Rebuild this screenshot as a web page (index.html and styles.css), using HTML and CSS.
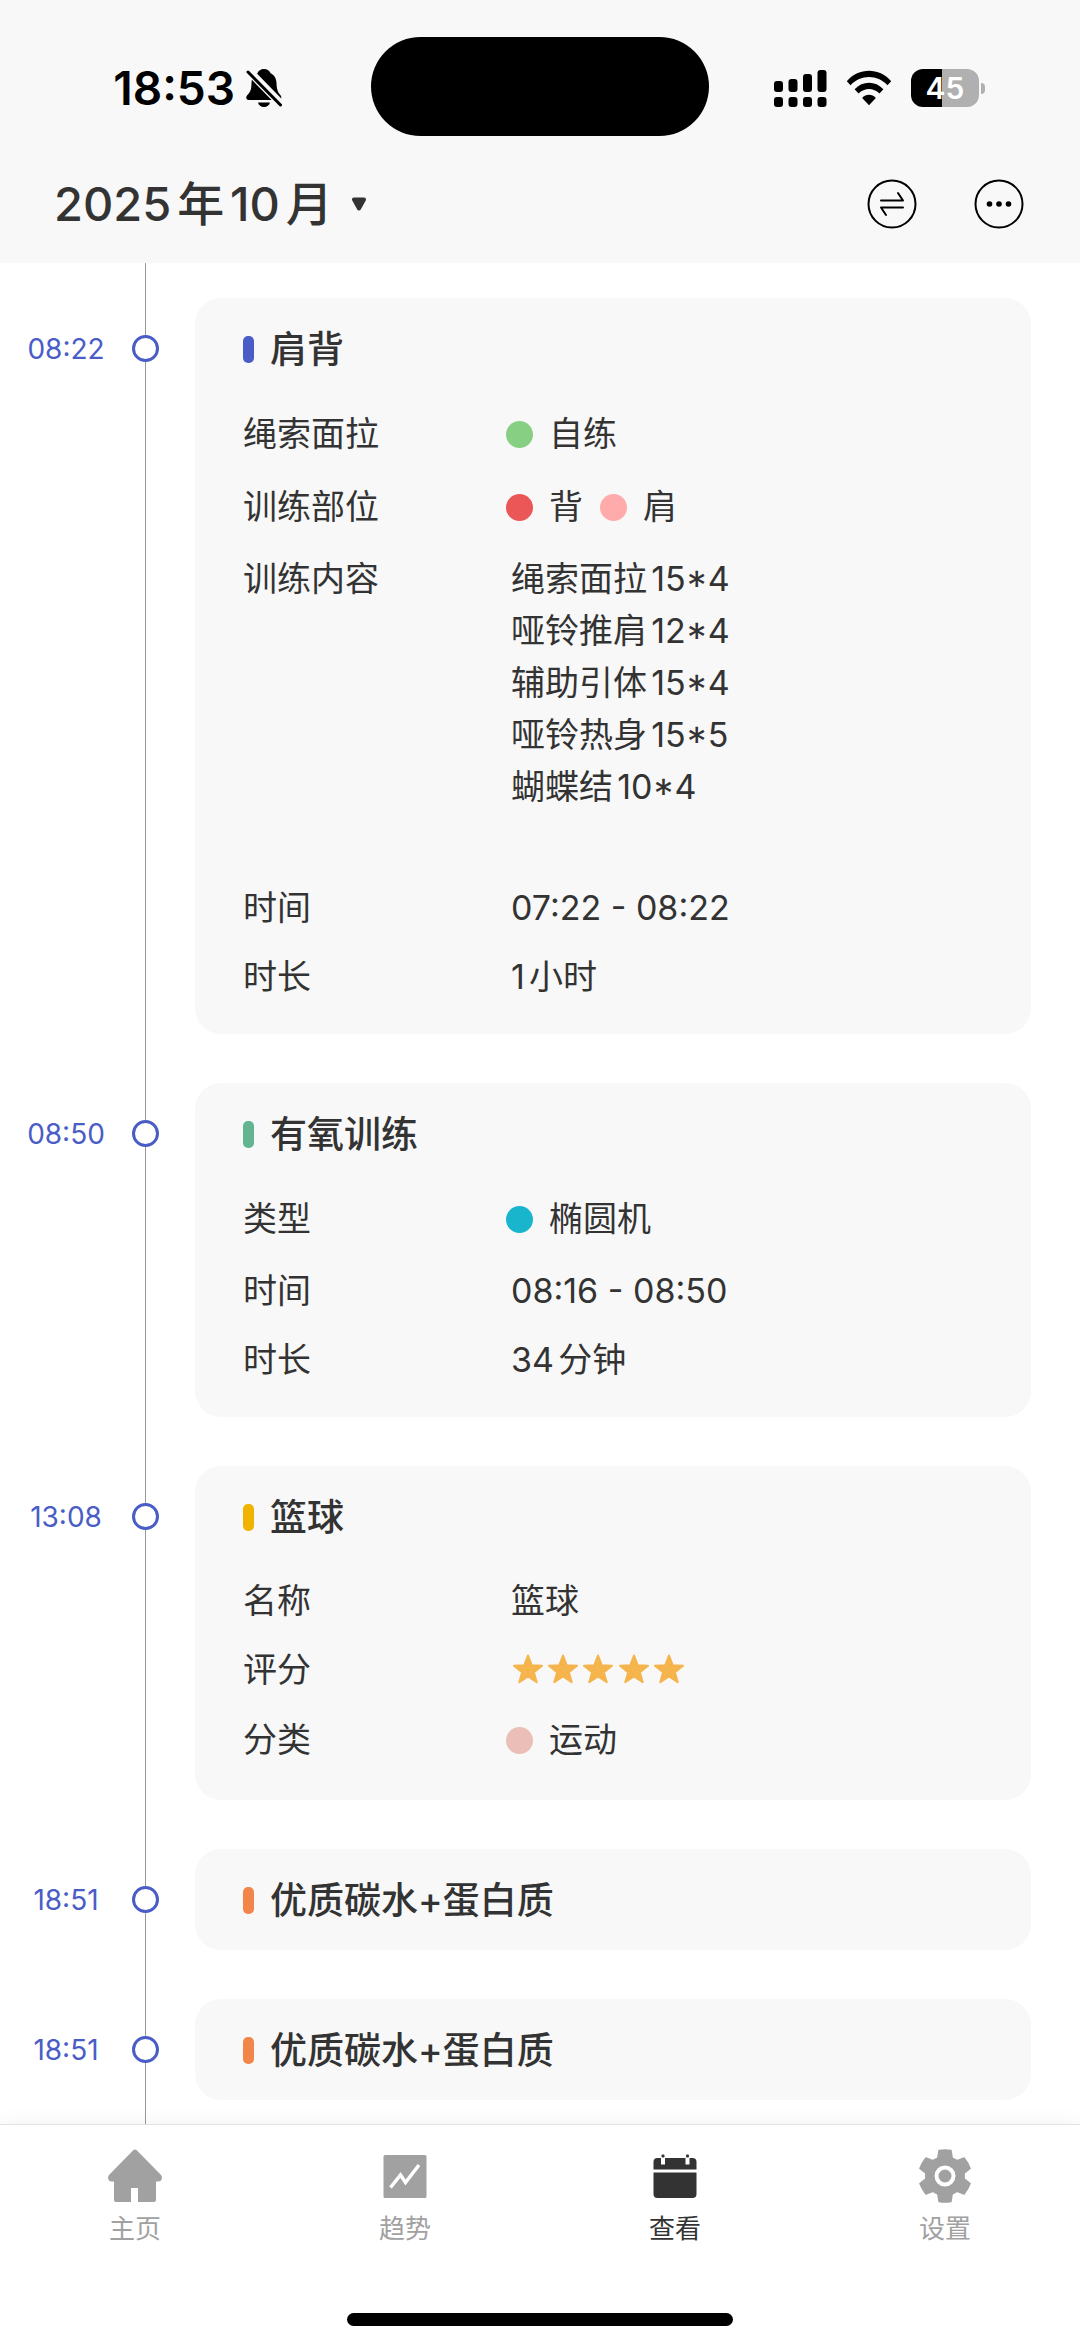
FILE: index.html
```html
<!DOCTYPE html>
<html lang="zh-CN">
<head>
<meta charset="utf-8">
<meta name="viewport" content="width=device-width, initial-scale=1">
<title>查看</title>
<link rel="stylesheet" href="styles.css">
</head>
<body>
<header class="header">
  <div class="status">
    <div class="status-left">
      <span class="clock">18:53</span>
      <svg class="bell" viewBox="0 0 36 38" width="36" height="38" aria-hidden="true">
        <path d="M18 0c3.300 0 5.600 1.800 6.600 4.300 4 1.900 5.700 5.400 5.900 9.700.2 6.500 1.400 9.500 4.200 12.500 1 1.200 1 4.500-1.500 4.500H3C-.5 31 0 27.500 1 26.500c3.400-3.300 4.400-6 4.500-12.500.1-4.300 1.900-7.800 5.900-9.700C12.400 1.800 14.700 0 18 0zM12 33.500h12c-.7 2.800-3 4.500-6 4.500s-5.300-1.700-6-4.500z"/>
        <path d="M0-1 38 38" stroke="#f8f8f8" stroke-width="8"/>
        <path d="M2 3 34.500 36" stroke="#000" stroke-width="3" stroke-linecap="round"/>
      </svg>
    </div>
    <div class="island"></div>
    <div class="status-right">
      <svg viewBox="0 0 53 38" width="53" height="38" aria-hidden="true">
        <rect x="0" y="12" width="9" height="11" rx="3"/><rect x="14.500" y="10" width="9" height="13" rx="3"/><rect x="29" y="5" width="9" height="18" rx="3"/><rect x="43.500" y="1" width="9" height="22" rx="3"/>
        <rect x="0" y="28" width="9" height="10" rx="3"/><rect x="14.500" y="28" width="9" height="10" rx="3"/><rect x="29" y="28" width="9" height="10" rx="3"/><rect x="43.500" y="28" width="9" height="10" rx="3"/>
      </svg>
      <svg viewBox="0 0 46 36" width="46" height="36" aria-hidden="true">
        <path d="M.8 11.200C13-2.600 33-2.600 45.200 11.200L41.500 15.200C31.500 4.200 14.500 4.200 4.500 15.200z"/>
        <path d="M8.600 19.200c8-8.600 20.800-8.600 28.800 0l-3.900 4.400c-6-6-15-6-21 0z"/>
        <path d="M16.200 28c3.700-4.300 9.900-4.300 13.600 0L23 35.200z"/>
      </svg>
      <span class="battery">45</span>
    </div>
  </div>
  <div class="toolbar">
    <button class="month" type="button">2025年10月
      <svg viewBox="0 0 16 14" width="16" height="14" aria-hidden="true"><path d="M3 2.500h10L8 11.500z" stroke="currentColor" stroke-width="4" stroke-linejoin="round" fill="currentColor"/></svg>
    </button>
    <div class="actions">
      <button class="icon-button" type="button" aria-label="切换">
        <svg viewBox="0 0 50 50" width="50" height="50" fill="none" stroke="#000" stroke-width="2" stroke-linecap="round" stroke-linejoin="round"><circle cx="25" cy="25" r="23.500"/><path d="M14 21.500h22l-5-7.500M36 28.500H14l5 7.500"/></svg>
      </button>
      <button class="icon-button" type="button" aria-label="更多">
        <svg viewBox="0 0 50 50" width="50" height="50"><circle cx="25" cy="25" r="23.500" fill="none" stroke="#000" stroke-width="2"/><circle cx="15.500" cy="25" r="2.800"/><circle cx="25" cy="25" r="2.800"/><circle cx="34.500" cy="25" r="2.800"/></svg>
      </button>
    </div>
  </div>
</header>

<main class="timeline">
  <ol class="entries">
    <li class="entry">
      <time class="entry-time">08:22</time><span class="node"></span>
      <article class="card">
        <h2 class="card-title indigo">肩背</h2>
        <dl class="fields">
          <div class="field tagged"><dt>绳索面拉</dt><dd><span class="tag green">自练</span></dd></div>
          <div class="field tagged"><dt>训练部位</dt><dd><span class="tag red">背</span><span class="tag pink">肩</span></dd></div>
          <div class="field"><dt>训练内容</dt><dd class="note">绳索面拉15*4<br>哑铃推肩12*4<br>辅助引体15*4<br>哑铃热身15*5<br>蝴蝶结10*4</dd></div>
          <div class="field"><dt>时间</dt><dd>07:22 - 08:22</dd></div>
          <div class="field"><dt>时长</dt><dd>1小时</dd></div>
        </dl>
      </article>
    </li>
    <li class="entry">
      <time class="entry-time">08:50</time><span class="node"></span>
      <article class="card">
        <h2 class="card-title teal">有氧训练</h2>
        <dl class="fields">
          <div class="field tagged"><dt>类型</dt><dd><span class="tag cyan">椭圆机</span></dd></div>
          <div class="field"><dt>时间</dt><dd>08:16 - 08:50</dd></div>
          <div class="field"><dt>时长</dt><dd>34分钟</dd></div>
        </dl>
      </article>
    </li>
    <li class="entry">
      <time class="entry-time">13:08</time><span class="node"></span>
      <article class="card">
        <h2 class="card-title yellow">篮球</h2>
        <dl class="fields">
          <div class="field"><dt>名称</dt><dd>篮球</dd></div>
          <div class="field"><dt>评分</dt><dd>
            <svg class="stars" viewBox="-1 1 175 32" width="175" height="32" role="img" aria-label="5 星">
              <defs><path id="star" d="M16 2.500l3.700 9.700 10.300.5-8.100 6.500 2.800 10L16 23.500l-8.700 5.700 2.800-10L2 12.700l10.300-.5z" stroke-width="2" stroke-linejoin="round"/></defs>
              <use href="#star"/><use href="#star" x="35"/><use href="#star" x="70"/><use href="#star" x="106"/><use href="#star" x="141"/>
            </svg></dd></div>
          <div class="field tagged"><dt>分类</dt><dd><span class="tag rose">运动</span></dd></div>
        </dl>
      </article>
    </li>
    <li class="entry">
      <time class="entry-time">18:51</time><span class="node"></span>
      <article class="card"><h2 class="card-title orange">优质碳水+蛋白质</h2></article>
    </li>
    <li class="entry">
      <time class="entry-time">18:51</time><span class="node"></span>
      <article class="card"><h2 class="card-title orange">优质碳水+蛋白质</h2></article>
    </li>
  </ol>
</main>

<footer class="footer">
  <nav class="tabs">
    <a class="tab" href="#home">
      <svg viewBox="0 0 56 56" width="56" height="56"><path d="M26 2.500q2-2 4 0L54 27q1.500 2 .8 4-.8 2.500-3.500 2.500H49V52q0 2-2 2H31V40h-7v14H9q-2 0-2-2V33.500H4.500Q2 33.500 1.200 31 .6 29 2 27z"/></svg>
      主页</a>
    <a class="tab" href="#trend">
      <svg viewBox="0 0 56 56" width="56" height="56"><rect x="6.500" y="7" width="43" height="43" rx="1.500"/><path d="M13.500 39.500 23.500 27l5 7.500 13.500-17.500" fill="none" stroke="#fff" stroke-width="3.500"/></svg>
      趋势</a>
    <a class="tab current" href="#view" aria-current="page">
      <svg viewBox="0 0 56 56" width="56" height="56"><path d="M6.500 21.500V14q0-4 4-4H14v6.500h4V10h20.500v6.500h4V10h3q4 0 4 4v7.500zM6.500 24.500h43V46q0 4-4 4h-35q-4 0-4-4z"/><rect x="14.500" y="6.500" width="3" height="3" rx="1"/><rect x="39" y="6.500" width="3" height="3" rx="1"/></svg>
      查看</a>
    <a class="tab" href="#settings">
      <svg viewBox="-28 -28 56 56" width="56" height="56">
        <defs><path id="tooth" d="M-7.500-16-6-25.500Q0-26.500 6-25.500L7.500-16 0 0z" stroke="currentColor" stroke-width="1.500" stroke-linejoin="round"/></defs>
        <circle r="20"/><use href="#tooth"/><use href="#tooth" transform="rotate(60)"/><use href="#tooth" transform="rotate(120)"/><use href="#tooth" transform="rotate(180)"/><use href="#tooth" transform="rotate(240)"/><use href="#tooth" transform="rotate(300)"/>
        <circle r="8.500" fill="none" stroke="#fff" stroke-width="4"/>
      </svg>
      设置</a>
  </nav>
  <div class="home-bar"></div>
</footer>
</body>
</html>
```
FILE: styles.css
```css
* { box-sizing: border-box; }

body {
  margin: 0;
  min-height: 100vh;
  display: flex;
  flex-direction: column;
  background: #fff;
  color: #333;
  font-family: Inter, "Noto Sans CJK SC", sans-serif;
  font-size: 34px;
  line-height: 52px;
  text-autospace: normal;
}

button {
  padding: 0;
  border: 0;
  background: none;
  color: inherit;
  font: inherit;
}

svg { display: block; flex: none; }

.header { padding-top: 37px; background: #f8f8f8; }

.status {
  display: grid;
  grid-template-columns: 1fr 338px 1fr;
  height: 99px;
  align-items: center;
  color: #000;
}
.status-left { display: flex; align-items: center; justify-content: flex-end; gap: 11px; padding: 2px 89px 0 0; }
.clock { font-size: 46px; font-weight: 600; }
.island { height: 99px; border-radius: 50px; background: #000; }
.status-right { display: flex; align-items: center; gap: 19px; padding: 2px 0 0 65px; }
.battery {
  position: relative;
  width: 68px;
  height: 38px;
  border-radius: 12px;
  background: linear-gradient(90deg, #000 31px, #b0b0b0 31px);
  color: #fff;
  font-size: 30px;
  font-weight: 600;
  line-height: 38px;
  text-align: center;
}
.battery::after {
  content: "";
  position: absolute;
  right: -6px;
  top: 14px;
  width: 4px;
  height: 11px;
  border-radius: 0 6px 6px 0;
  background: #b0b0b0;
}

.toolbar {
  display: flex;
  align-items: center;
  justify-content: space-between;
  height: 127px;
  padding: 8px 56px 0 54px;
}
.month { display: flex; align-items: center; gap: 18px; font-size: 47px; font-weight: 500; }
.actions { display: flex; gap: 57px; }

.timeline { position: relative; flex: 1; padding: 35px 49px 24px 22px; }
.timeline::before {
  content: "";
  position: absolute;
  left: 145px;
  top: 0;
  bottom: 0;
  width: 1px;
  background: #999;
}
.entries { display: flex; flex-direction: column; gap: 49px; margin: 0; padding: 0; list-style: none; }
.entry { position: relative; display: grid; grid-template-columns: 88px 49px 1fr; }
.entry-time { padding-top: 25px; color: #4a5dc6; font-size: 28px; line-height: 53px; text-align: center; }
.node {
  justify-self: end;
  width: 27px;
  height: 27px;
  margin-top: 37px;
  border: 3px solid #4a5dc6;
  border-radius: 50%;
  background: #fff;
}
.card { margin-left: 36px; padding: 25px 48px 23px; border-radius: 26px; background: #f8f8f8; }
.card-title { display: flex; align-items: center; gap: 16px; margin: 0; font-size: 37px; font-weight: 500; line-height: 53px; }
.card-title::before { content: ""; width: 11px; height: 27px; border-radius: 5px; background: var(--mark); }

.fields { margin: 22px 0 0; }
.field { display: grid; grid-template-columns: 263px 1fr; padding: 9px 0 8px; }
.tagged { padding: 10px 0 11px; }
.field dd { display: flex; align-items: center; gap: 17px; margin: 0; padding-left: 5px; }
.field .note { display: block; padding-bottom: 52px; }
.tagged dd { padding-left: 0; }
.tag { display: flex; align-items: center; gap: 16px; }
.tag::before { content: ""; width: 27px; height: 27px; border-radius: 50%; background: var(--mark); }
.stars { fill: #f5b44c; stroke: #f5b44c; }

.indigo { --mark: #4a5dc6; }
.teal { --mark: #63b592; }
.yellow { --mark: #f0b400; }
.orange { --mark: #f2854a; }
.green { --mark: #87d083; }
.red { --mark: #eb5757; }
.pink { --mark: #ffabab; }
.cyan { --mark: #19b5cd; }
.rose { --mark: #ebbfb7; }

.footer {
  position: relative;
  padding-bottom: 22px;
  border-top: 1px solid #e2e2e2;
  background: #fff;
  box-shadow: 0 0 20px rgba(0, 0, 0, 0.06);
}
.tabs { display: grid; grid-template-columns: repeat(4, 1fr); height: 188px; padding-top: 23px; }
.tab {
  display: flex;
  flex-direction: column;
  align-items: center;
  gap: 5px;
  color: #a1a1a1;
  fill: currentColor;
  font-size: 26px;
  line-height: 40px;
  text-decoration: none;
}
.current { color: #333; }
.home-bar { width: 386px; height: 13px; margin: 0 auto; border-radius: 7px; background: #000; }
```
